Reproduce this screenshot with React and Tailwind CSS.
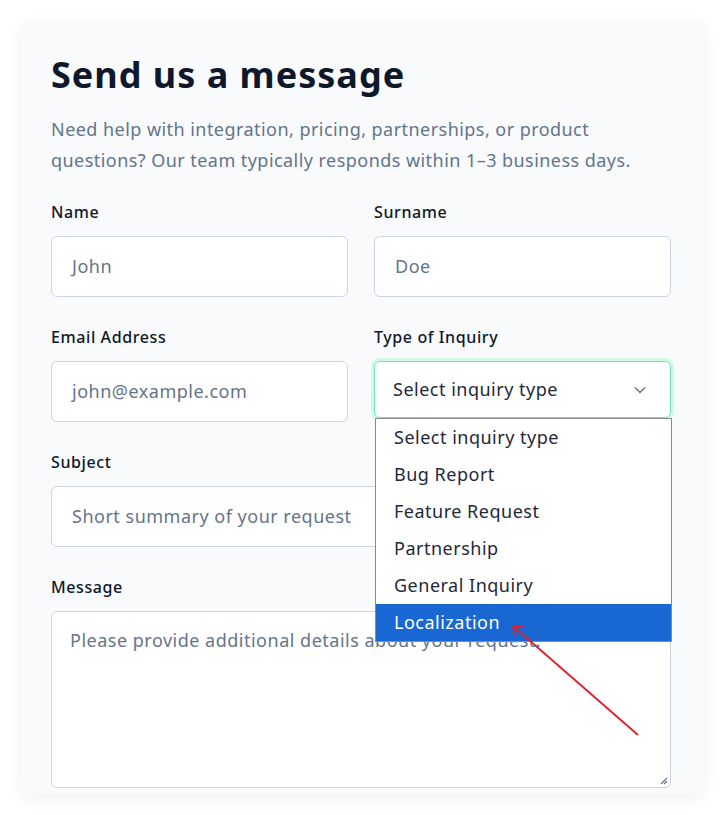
import React from "react";

const font = { fontFamily: "'Noto Sans', sans-serif" };

function Label({ children }) {
  return <div className="text-[16px] leading-6 font-medium tracking-[0.6px] text-[#0f172a] mb-3">{children}</div>;
}

function Input({ placeholder }) {
  return (
    <div className="h-[61px] rounded-md border border-[#cbd5e1] bg-white flex items-center px-5 text-[18px] tracking-[0.5px] text-[#64748b]">
      {placeholder}
    </div>
  );
}

const options = ["Select inquiry type", "Bug Report", "Feature Request", "Partnership", "General Inquiry", "Localization"];

export default function App() {
  return (
    <div className="min-h-[815px] bg-white pt-5 px-5" style={font}>
      <div className="w-[685px] h-[775px] rounded-xl bg-[#f8fafc] shadow-[0_4px_16px_rgba(15,23,42,0.06)] pl-[31px] pr-[34px] pt-[35px] relative">
        <h1 className="text-[36px] leading-10 font-bold tracking-[1px] text-[#0f172a]">Send us a message</h1>
        <p className="mt-[19px] text-[18px] leading-[31px] tracking-[0.45px] text-[#64748b]">
          Need help with integration, pricing, partnerships, or product
          <br />
          questions? Our team typically responds within 1–3 business days.
        </p>
        <div className="mt-6 grid grid-cols-2 gap-x-[26px] gap-y-7">
          <div>
            <Label>Name</Label>
            <Input placeholder="John" />
          </div>
          <div>
            <Label>Surname</Label>
            <Input placeholder="Doe" />
          </div>
          <div>
            <Label>Email Address</Label>
            <Input placeholder="john@example.com" />
          </div>
          <div className="relative">
            <Label>Type of Inquiry</Label>
            <div className="h-[57px] rounded-md border border-[#6ee7b7] ring-[3px] ring-[#d1fae5] bg-white flex items-center justify-between pl-[18px] pr-6 text-[18px] tracking-[0.5px] text-[#1e293b]">
              <span>Select inquiry type</span>
              <svg width="12" height="8" viewBox="0 0 12 8" fill="none" stroke="#64748b" strokeWidth="1.5">
                <path d="M1 1.5l5 5 5-5" />
              </svg>
            </div>
            <div className="absolute left-px top-[93px] w-[297px] z-10 bg-white border border-[#8a8a8a]">
              {options.map((o, i) => (
                <div
                  key={o}
                  className={
                    i === 5
                      ? "h-[37px] flex items-center px-[18px] text-[18px] tracking-[0.5px] bg-[#1967d2] text-white"
                      : "h-[37px] flex items-center px-[18px] text-[18px] tracking-[0.5px] text-[#1e293b]"
                  }
                >
                  {o}
                </div>
              ))}
            </div>
          </div>
          <div className="col-span-2">
            <Label>Subject</Label>
            <Input placeholder="Short summary of your request" />
          </div>
          <div className="col-span-2">
            <Label>Message</Label>
            <div className="h-[177px] rounded-md border border-[#cbd5e1] bg-white px-[18px] pt-4 text-[18px] leading-6 tracking-[0.5px] text-[#64748b] relative">
              Please provide additional details about your request.
              <svg className="absolute right-[2px] bottom-[2px]" width="10" height="10" viewBox="0 0 10 10" stroke="#64748b" strokeWidth="1.2">
                <path d="M9 3L3 9M9 6L6 9" />
              </svg>
            </div>
          </div>
        </div>
        <svg className="absolute left-0 top-0 z-20 pointer-events-none" width="685" height="775" viewBox="0 0 685 775">
          <path d="M618 715L493 606" stroke="#e11d2a" strokeWidth="1.8" fill="none" />
          <path d="M503 607L493 606L496 616" stroke="#e11d2a" strokeWidth="1.8" fill="none" />
        </svg>
      </div>
    </div>
  );
}
